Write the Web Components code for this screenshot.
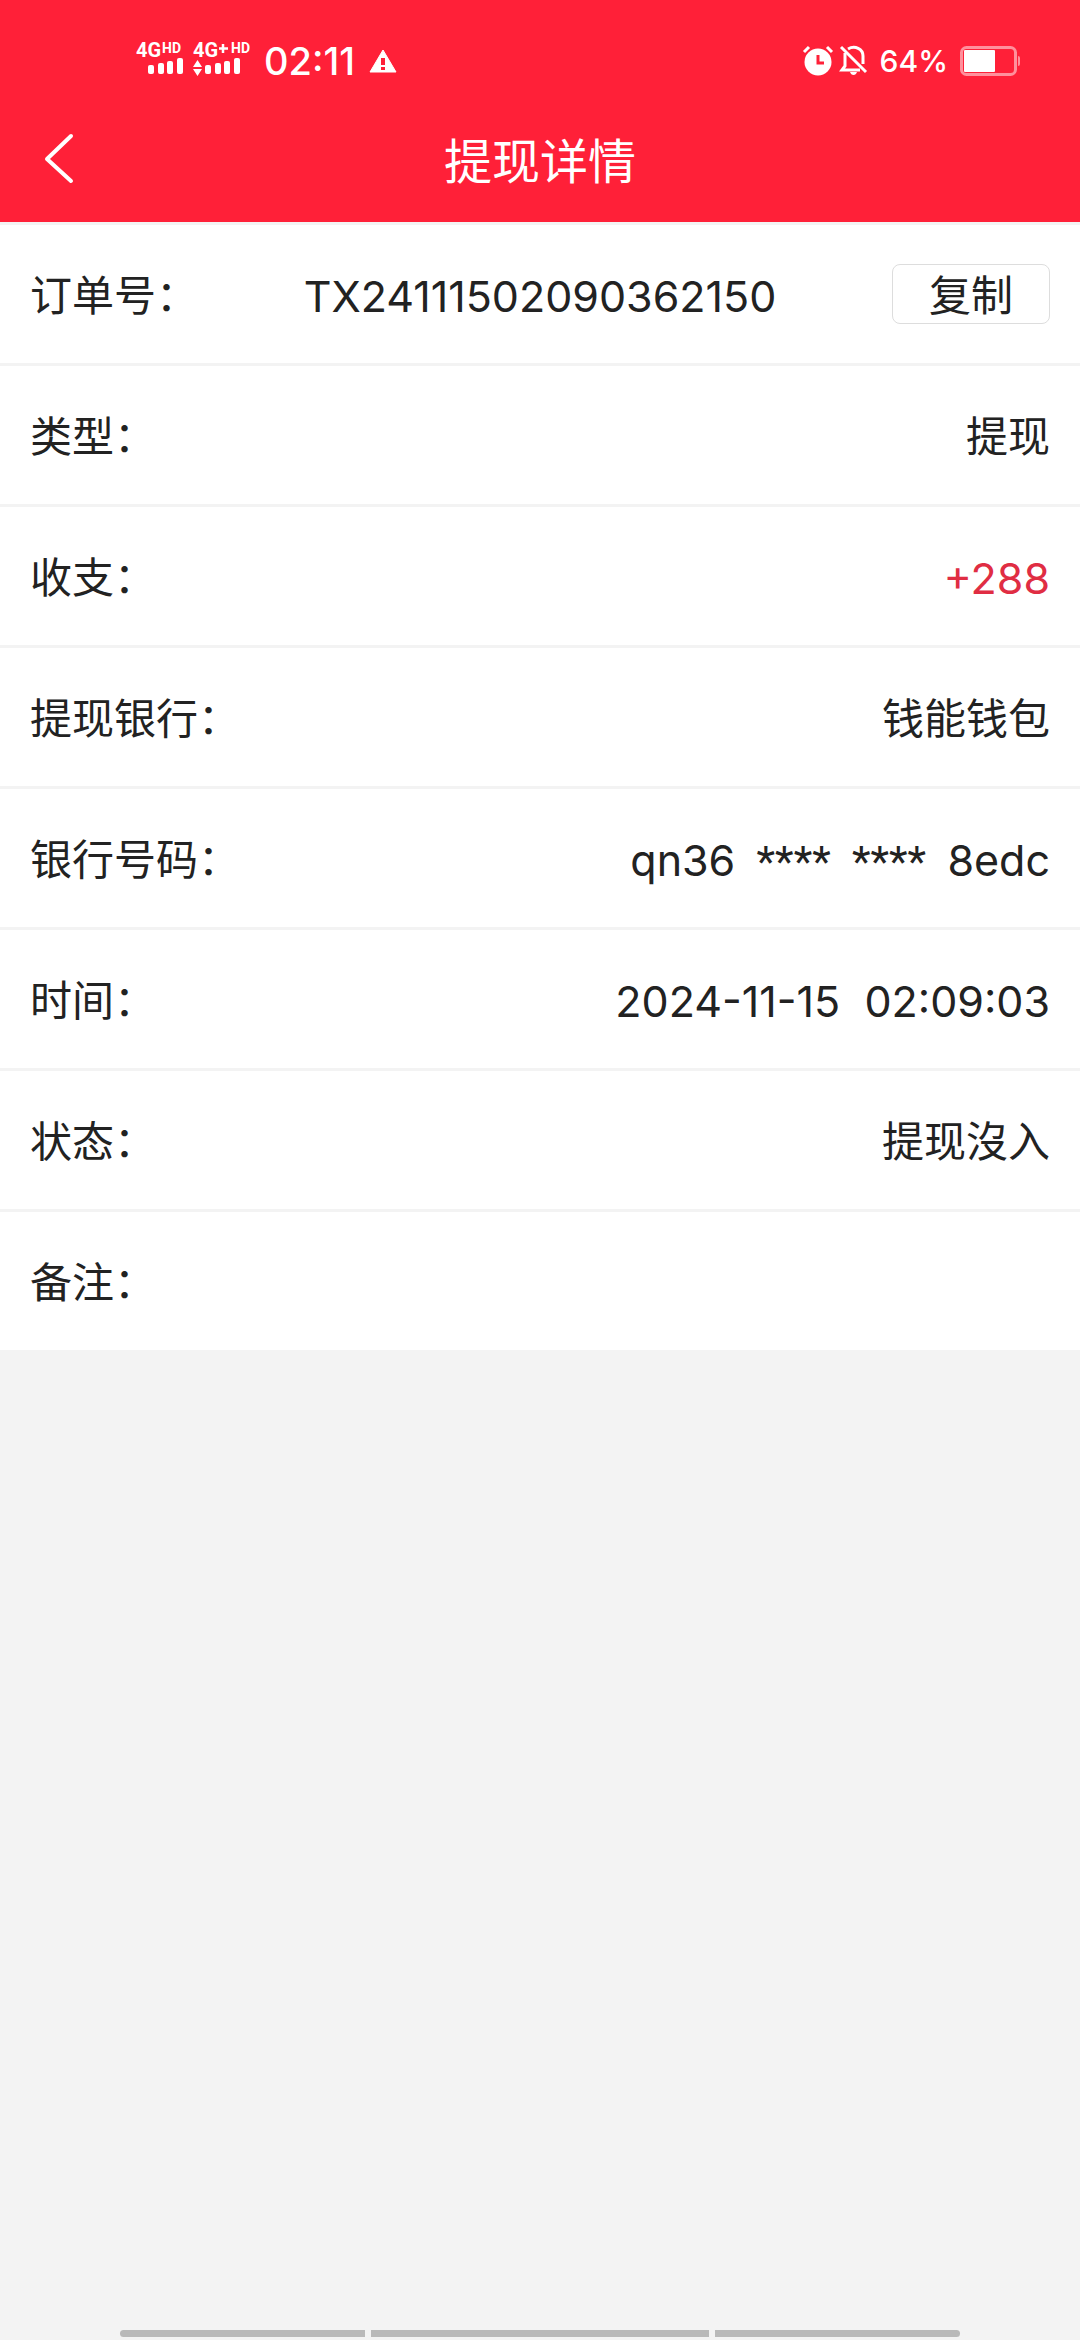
<!DOCTYPE html>
<html lang="zh-CN">
<head>
<meta charset="UTF-8">
<meta name="viewport" content="width=device-width, initial-scale=1">
<title>提现详情</title>
<style>
  body {
    margin: 0;
    font-family: Inter, "Noto Sans CJK SC", sans-serif;
    color: #222;
    background-color: #f3f3f3;
  }

  .mask {
    font-family: Roboto, sans-serif;
  }
</style>
</head>
<body>
<detail-page>
  <status-bar slot="top" time="02:11" battery="64"></status-bar>
  <nav-header slot="top">提现详情</nav-header>
  <detail-row label="订单号：" centered numeric>TX24111502090362150<copy-button slot="action">复制</copy-button></detail-row>
  <detail-row label="类型：">提现</detail-row>
  <detail-row label="收支：" color="#e02d43" numeric>+288</detail-row>
  <detail-row label="提现银行：">钱能钱包</detail-row>
  <detail-row label="银行号码：" numeric>qn36<span class="mask">  ****  ****  </span>8edc</detail-row>
  <detail-row label="时间：" numeric>2024-11-15  02:09:03</detail-row>
  <detail-row label="状态：">提现沒入</detail-row>
  <detail-row label="备注："></detail-row>
  <gesture-bar slot="bottom"></gesture-bar>
</detail-page>

<script>
// Page.js
class DetailPage extends HTMLElement {
  constructor() {
    super();
    this.attachShadow({ mode: 'open' });
    this.shadowRoot.innerHTML =
      `
      <style>
        :host {
          display: flex;
          flex-direction: column;
          min-height: 100vh;
        }

        header {
          background-color: #ff2038;
          color: #fff;
        }

        main {
          flex: 1;
        }
      </style>
      <header><slot name="top"></slot></header>
      <main><slot></slot></main>
      <slot name="bottom"></slot>
    `;
  }
}

// StatusBar.js
class StatusBar extends HTMLElement {
  constructor() {
    super();
    this.attachShadow({ mode: 'open' });
    this._time = '';
    this._battery = '';
    this.render();
  }

  static get observedAttributes() {
    return ['time', 'battery'];
  }

  attributeChangedCallback(name, oldVal, newVal) {
    this._time = name === 'time' ? newVal : this._time;
    this._battery = name === 'battery' ? newVal : this._battery;
    this.render();
  }

  render() {
    this.shadowRoot.innerHTML =
      `
      <style>
        :host {
          display: flex;
          justify-content: space-between;
          align-items: center;
          height: 58px;
          padding: 32px 60px 0 134px;
          font-weight: 500;
        }

        .group {
          display: flex;
          align-items: center;
        }

        .time {
          margin: 0 14px 0 8px;
          font-size: 38px;
        }

        .percent {
          margin: 0 12px;
          font-size: 30px;
        }

        svg {
          display: block;
          overflow: visible;
          fill: #fff;
        }

        text {
          font-family: Roboto, sans-serif;
          font-weight: 700;
        }
      </style>
      <div class="group">
        <svg width="122" height="56" viewBox="0 -8 122 56" role="img" aria-label="signal">
          <text x="2" y="16" font-size="20">4G</text>
          <text x="28" y="12" font-size="14">HD</text>
          <rect x="14" y="24" width="6" height="9" rx="2"/>
          <rect x="24" y="22" width="6" height="11" rx="2"/>
          <rect x="33" y="20" width="6" height="13" rx="2"/>
          <rect x="43" y="17" width="6" height="16" rx="2"/>
          <text x="59" y="16" font-size="20">4G</text>
          <path d="M89 3v9M85 7.500h9" stroke="#fff" stroke-width="2.500"/>
          <text x="97" y="12" font-size="14">HD</text>
          <path d="M59 26l4.500-7 4.500 7zM59 28l4.500 7 4.500-7z"/>
          <rect x="71" y="24" width="6" height="9" rx="2"/>
          <rect x="81" y="22" width="6" height="11" rx="2"/>
          <rect x="90" y="20" width="6" height="13" rx="2"/>
          <rect x="100" y="17" width="6" height="16" rx="2"/>
        </svg>
        <span class="time">${this._time}</span>
        <svg width="28" height="24" viewBox="0 0 28 24" role="img" aria-label="warning">
          <path d="M14 1L27 23H1z" stroke="#fff" stroke-linejoin="round"/>
          <path d="M12 9h4v7h-4zM12 18h4v3h-4z" fill="#ff2038"/>
        </svg>
      </div>
      <div class="group">
        <svg width="66" height="32" viewBox="0 0 66 32" role="img" aria-label="alarm on, muted">
          <circle cx="16" cy="17" r="13.500"/>
          <path d="M2 7l5-5M25 2l5 5" fill="none" stroke="#fff" stroke-width="3"/>
          <path d="M16 10v8h6" fill="none" stroke="#ff2038" stroke-width="3"/>
          <path d="M43 8v13l-3 4h18M46 4c7-4 15 0 15 7v8" fill="none" stroke="#fff" stroke-width="3"/>
          <path d="M39 2l25 25" fill="none" stroke="#fff" stroke-width="3"/>
          <path d="M48 27h7q-1 3-3.500 3t-3.500-3z"/>
        </svg>
        <span class="percent">${this._battery}%</span>
        <svg width="60" height="30" viewBox="0 0 60 30" role="img" aria-label="battery">
          <rect x="1.500" y="1.500" width="54" height="27" rx="5" fill="none" stroke="#fff" stroke-opacity=".5" stroke-width="3"/>
          <rect x="4" y="4" width="31" height="22" rx="1"/>
          <path d="M58 10q2 0 2 2v6q0 2-2 2z" fill-opacity=".5"/>
        </svg>
      </div>
    `;
  }
}

// NavHeader.js
class NavHeader extends HTMLElement {
  constructor() {
    super();
    this.attachShadow({ mode: 'open' });
    this.shadowRoot.innerHTML =
      `
      <style>
        :host {
          display: grid;
          grid-template-columns: 1fr auto 1fr;
          align-items: center;
          height: 128px;
          padding: 4px 30px 0;
        }

        button {
          justify-self: start;
          padding: 12px;
          border: 0;
          background: none;
        }

        svg {
          display: block;
        }

        h1 {
          margin: 0;
          font-size: 48px;
          font-weight: 400;
        }
      </style>
      <button type="button" aria-label="返回">
        <svg width="32" height="54" viewBox="0 0 32 54">
          <path d="M29 5L5 28l24 22" fill="none" stroke="#fff" stroke-width="4" stroke-linecap="round" stroke-linejoin="round"/>
        </svg>
      </button>
      <h1><slot></slot></h1>
    `;
  }
}

// DetailRow.js
class DetailRow extends HTMLElement {
  constructor() {
    super();
    this.attachShadow({ mode: 'open' });
    this._label = '';
    this._color = 'inherit';
    this.render();
  }

  static get observedAttributes() {
    return ['label', 'color'];
  }

  attributeChangedCallback(name, oldVal, newVal) {
    this._label = name === 'label' ? newVal : this._label;
    this._color = name === 'color' ? newVal : this._color;
    this.render();
  }

  render() {
    this.shadowRoot.innerHTML =
      `
      <style>
        :host {
          display: grid;
          grid-template-columns: auto 1fr;
          align-items: center;
          min-height: 138px;
          padding: 0 30px;
          border-top: 3px solid #f3f3f3;
          background-color: #fff;
          font-size: 42px;
          line-height: 60px;
        }

        /* Value in the middle, action at the right edge */
        :host([centered]) {
          grid-template-columns: 1fr auto 1fr;
        }

        .label,
        .value {
          padding-top: 4px;
        }

        .value {
          text-align: right;
          white-space: pre;
          color: ${this._color};
        }

        :host([numeric]) .value {
          font-size: 43px;
        }

        ::slotted([slot="action"]) {
          justify-self: end;
        }
      </style>
      <span class="label">${this._label}</span>
      <span class="value"><slot></slot></span>
      <slot name="action"></slot>
    `;
  }
}

// CopyButton.js
class CopyButton extends HTMLElement {
  constructor() {
    super();
    this.attachShadow({ mode: 'open' });
    this.shadowRoot.innerHTML =
      `
      <style>
        :host {
          display: block;
        }

        button {
          display: block;
          height: 60px;
          padding: 4px 36px 0;
          border: 1px solid #ddd;
          border-radius: 8px;
          background-color: #fff;
          color: inherit;
          font: inherit;
          line-height: 54px;
        }
      </style>
      <button type="button"><slot></slot></button>
    `;
  }
}

// GestureBar.js
class GestureBar extends HTMLElement {
  constructor() {
    super();
    this.attachShadow({ mode: 'open' });
    this.shadowRoot.innerHTML =
      `
      <style>
        :host {
          display: flex;
          gap: 6px;
          padding: 0 120px 3px;
        }

        span {
          flex: 8;
          height: 7px;
          background-color: #b9b9b9;
        }

        span:nth-of-type(2) {
          flex: 11;
        }

        span:first-of-type {
          border-radius: 4px 0 0 4px;
        }

        span:last-of-type {
          border-radius: 0 4px 4px 0;
        }
      </style>
      <span></span><span></span><span></span>
    `;
  }
}

customElements.define('detail-page', DetailPage);
customElements.define('status-bar', StatusBar);
customElements.define('nav-header', NavHeader);
customElements.define('detail-row', DetailRow);
customElements.define('copy-button', CopyButton);
customElements.define('gesture-bar', GestureBar);
</script>
</body>
</html>
